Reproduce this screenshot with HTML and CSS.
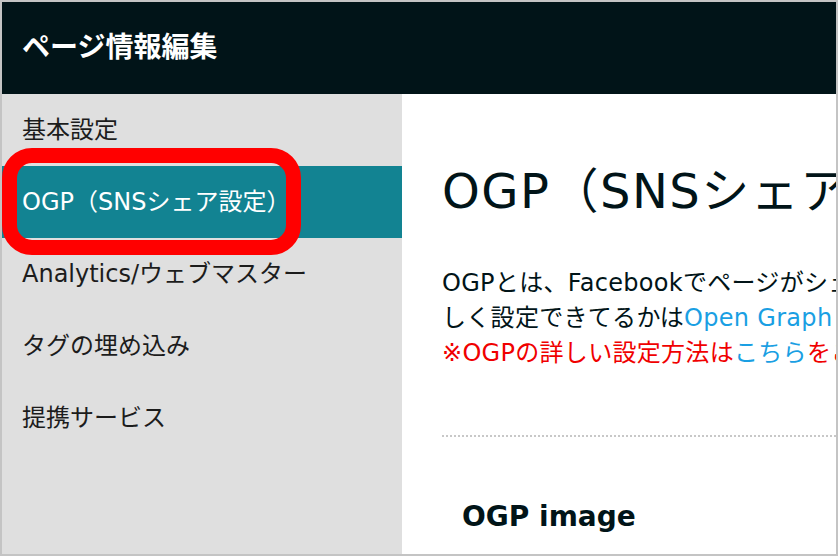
FILE: index.html
```html
<!DOCTYPE html>
<html lang="ja">
<head>
  <meta charset="UTF-8" />
  <title>ページ情報編集</title>
  <link rel="stylesheet" href="styles.css">
</head>
<body>
  <div class="frame">
    <header class="topbar">
      <h1>ページ情報編集</h1>
    </header>
    <div class="layout">
      <nav class="sidebar">
        <a class="nav-item">基本設定</a>
        <a class="nav-item active">OGP（SNSシェア設定）</a>
        <a class="nav-item">Analytics/ウェブマスター</a>
        <a class="nav-item">タグの埋め込み</a>
        <a class="nav-item">提携サービス</a>
      </nav>
      <main class="content">
        <h2 class="page-title">OGP（SNSシェア設定）</h2>
        <p class="lead">
          OGPとは、Facebookでページがシェアされた時に表示される内容の設定です。正<br />
          しく設定できてるかは<a href="#">Open Graph Debugger</a>で確認できます。<br />
          <span class="note">※OGPの詳しい設定方法は<a href="#">こちら</a>をご覧ください。</span>
        </p>
        <hr class="divider" />
        <h3 class="section-title">OGP image</h3>
      </main>
    </div>
  </div>
</body>
</html>
```
FILE: styles.css
```css
body {
  margin: 0;
  font-family: "DejaVu Sans", "Noto Sans CJK JP", sans-serif;
  color: #011418;
}
.frame {
  width: 838px;
  height: 556px;
  box-sizing: border-box;
  border: 2px solid #c4c4c4;
  overflow: hidden;
  display: flex;
  flex-direction: column;
}
.topbar {
  height: 92px;
  flex: none;
  background: #011418;
  padding-left: 20px;
}
.topbar h1 {
  margin: 0;
  color: #fff;
  font-size: 28px;
  font-weight: 700;
  line-height: 92px;
}
.layout {
  flex: 1;
  display: flex;
  min-height: 0;
}
.sidebar {
  width: 400px;
  flex: none;
  background: #dfdfdf;
}
.nav-item {
  display: block;
  position: relative;
  height: 72px;
  line-height: 72px;
  padding-left: 20px;
  font-size: 24px;
  color: #1c1c1c;
  white-space: nowrap;
}
.nav-item.active {
  background: #128392;
  color: #fff;
}
/* red highlight drawn over the active menu item */
.nav-item.active::after {
  content: "";
  position: absolute;
  left: 0;
  top: -18px;
  width: 299px;
  height: 107px;
  box-sizing: border-box;
  border: 15px solid #ff0000;
  border-radius: 30px;
}
.content {
  flex: 1;
  min-width: 0;
  background: #fff;
  padding-left: 40px;
  white-space: nowrap;
  overflow: hidden;
}
.page-title {
  margin: 68px 0 0;
  font-size: 48px;
  font-weight: 400;
  line-height: 58px;
  letter-spacing: 1.5px;
}
.lead {
  margin: 46px 0 0;
  font-size: 24px;
  line-height: 35px;
  letter-spacing: 0.3px;
}
.lead a {
  color: #1a9fe3;
  text-decoration: none;
}
.note {
  color: #f00000;
}
.divider {
  margin: 64px 0 0;
  border: 0;
  border-top: 2px dotted #c8c8c8;
}
.section-title {
  margin: 63px 0 0;
  padding-left: 20px;
  font-size: 28px;
  font-weight: 700;
  line-height: 34px;
}
```
